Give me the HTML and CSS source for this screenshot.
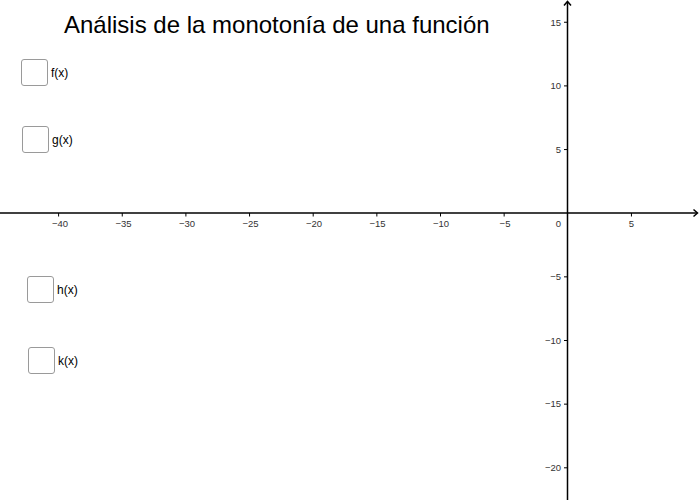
FILE: index.html
```html
<!DOCTYPE html>
<html lang="es">
<head>
<meta charset="utf-8">
<title>Análisis de la monotonía de una función</title>
<link rel="stylesheet" href="styles.css">
</head>
<body>
<div class="applet">
  <svg class="graph" width="700" height="500" viewBox="0 0 700 500">
    <g class="axes">
      <line x1="0" y1="213" x2="697" y2="213"/>
      <line x1="567.5" y1="2" x2="567.5" y2="500"/>
      <polyline points="564,5.5 567.5,1.5 571,5.5"/>
      <polyline points="693.5,209.5 697.5,213 693.5,216.5"/>
    </g>
    <g class="ticks">
      <line x1="58.6" y1="213" x2="58.6" y2="216.5"/>
      <line x1="122.25" y1="213" x2="122.25" y2="216.5"/>
      <line x1="185.9" y1="213" x2="185.9" y2="216.5"/>
      <line x1="249.55" y1="213" x2="249.55" y2="216.5"/>
      <line x1="313.2" y1="213" x2="313.2" y2="216.5"/>
      <line x1="376.85" y1="213" x2="376.85" y2="216.5"/>
      <line x1="440.5" y1="213" x2="440.5" y2="216.5"/>
      <line x1="504.15" y1="213" x2="504.15" y2="216.5"/>
      <line x1="631.45" y1="213" x2="631.45" y2="216.5"/>
      <line x1="564" y1="22.25" x2="567.5" y2="22.25"/>
      <line x1="564" y1="85.9" x2="567.5" y2="85.9"/>
      <line x1="564" y1="149.55" x2="567.5" y2="149.55"/>
      <line x1="564" y1="276.85" x2="567.5" y2="276.85"/>
      <line x1="564" y1="340.5" x2="567.5" y2="340.5"/>
      <line x1="564" y1="404.15" x2="567.5" y2="404.15"/>
      <line x1="564" y1="467.8" x2="567.5" y2="467.8"/>
    </g>
    <g class="xlabels">
      <text x="60" y="227">−40</text>
      <text x="123.5" y="227">−35</text>
      <text x="187" y="227">−30</text>
      <text x="250.5" y="227">−25</text>
      <text x="314" y="227">−20</text>
      <text x="377.5" y="227">−15</text>
      <text x="441" y="227">−10</text>
      <text x="505" y="227">−5</text>
      <text x="631.5" y="227">5</text>
    </g>
    <g class="ylabels">
      <text x="561" y="227">0</text>
      <text x="561" y="25.5">15</text>
      <text x="561" y="89">10</text>
      <text x="561" y="152.7">5</text>
      <text x="561" y="280">−5</text>
      <text x="561" y="343.7">−10</text>
      <text x="561" y="407.3">−15</text>
      <text x="561" y="471">−20</text>
    </g>
  </svg>

  <h1 class="title">Análisis de la monotonía de una función</h1>

  <label class="check check-f"><span class="box"></span><span class="name">f(x)</span></label>
  <label class="check check-g"><span class="box"></span><span class="name">g(x)</span></label>
  <label class="check check-h"><span class="box"></span><span class="name">h(x)</span></label>
  <label class="check check-k"><span class="box"></span><span class="name">k(x)</span></label>
</div>
</body>
</html>
```

FILE: styles.css
```css
html, body {
  margin: 0;
  padding: 0;
  background: #ffffff;
}

.applet {
  position: relative;
  width: 700px;
  height: 500px;
  overflow: hidden;
  font-family: "Liberation Sans", Arial, sans-serif;
  color: #000000;
}

.graph {
  display: block;
}

.axes line,
.axes polyline {
  stroke: #000000;
  stroke-width: 1.5;
  fill: none;
}

.ticks line {
  stroke: #000000;
  stroke-width: 1;
}

.xlabels text,
.ylabels text {
  font-family: "Liberation Sans", Arial, sans-serif;
  font-size: 9.5px;
  fill: #333333;
}

.xlabels text {
  text-anchor: middle;
}

.ylabels text {
  text-anchor: end;
}

.title {
  position: absolute;
  left: 64px;
  top: 11px;
  margin: 0;
  font-size: 24px;
  font-weight: normal;
  line-height: 28px;
  white-space: nowrap;
}

.check {
  position: absolute;
  display: flex;
  align-items: center;
  gap: 3px;
  height: 27px;
}

.box {
  box-sizing: border-box;
  width: 27px;
  height: 27px;
  border: 1.5px solid #9a9a9a;
  border-radius: 3px;
  background: #ffffff;
}

.name {
  font-size: 12px;
  line-height: 27px;
  padding-top: 1px;
  color: #000000;
}

.check-f { left: 21px; top: 59px; }
.check-g { left: 22px; top: 126px; }
.check-h { left: 27px; top: 276px; }
.check-k { left: 28px; top: 347px; }
```
